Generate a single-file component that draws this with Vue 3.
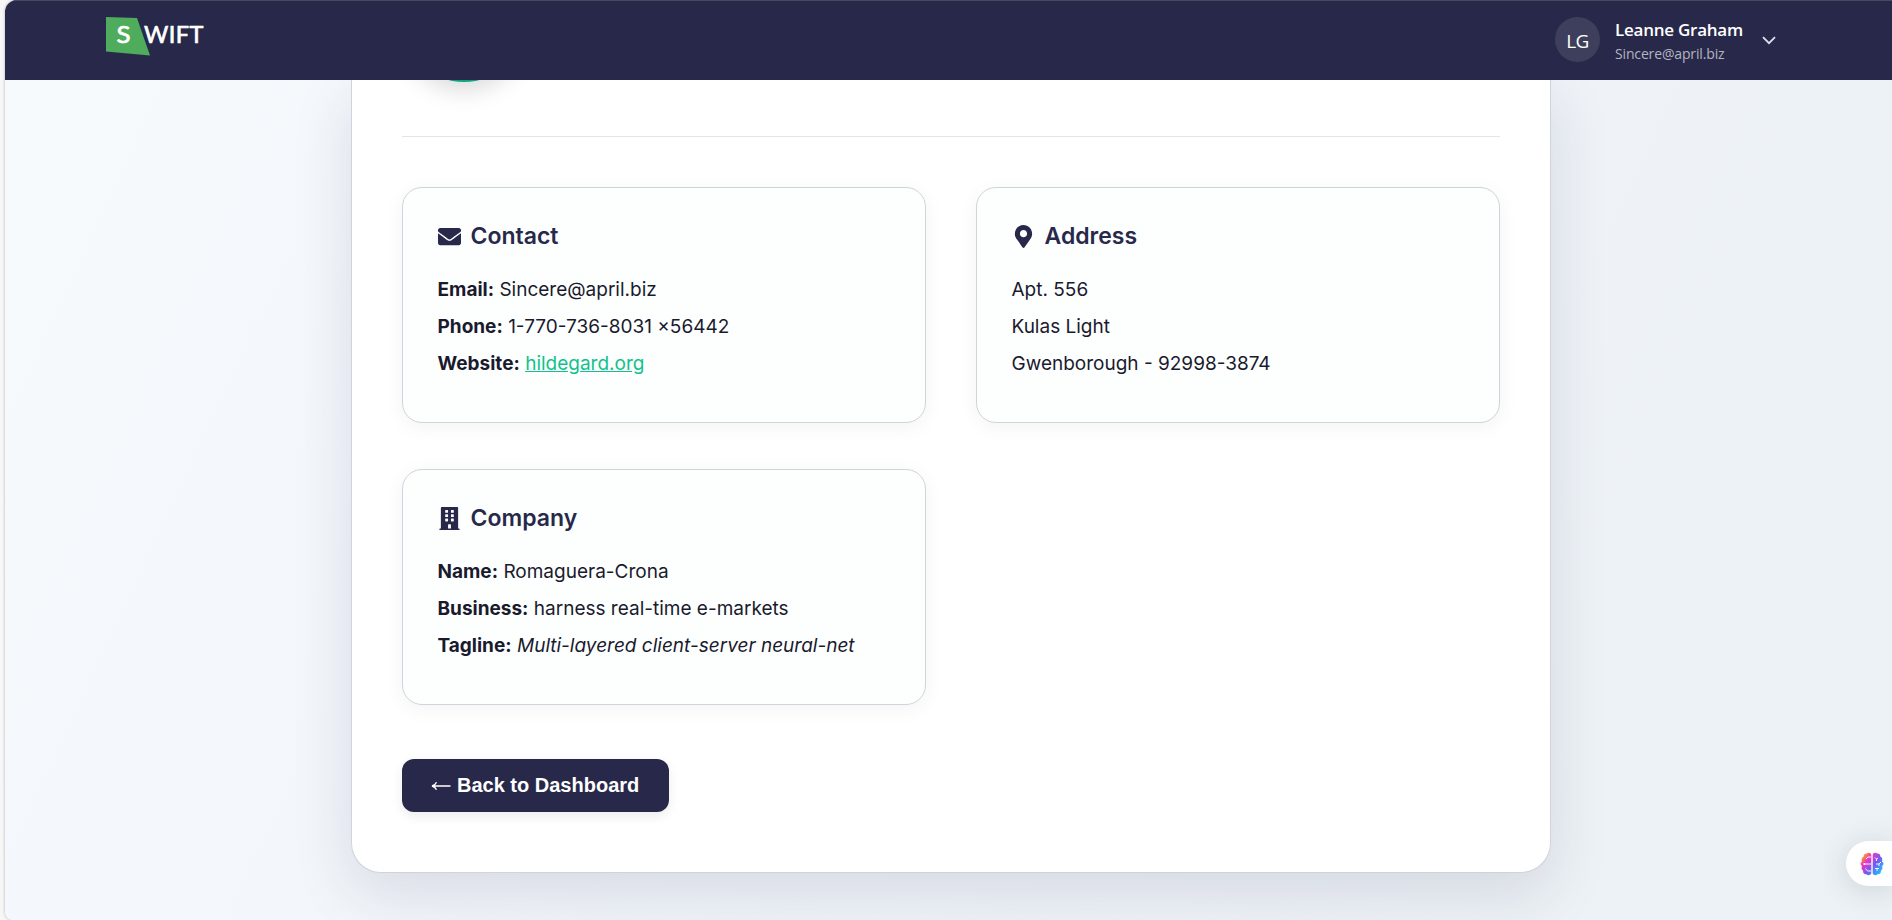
<script setup>
const icons = {
  mail: 'M502.3 190.8c3.9-3.1 9.7-.2 9.7 4.7V400c0 26.5-21.5 48-48 48H48c-26.5 0-48-21.5-48-48V195.6c0-5 5.7-7.8 9.7-4.7 22.4 17.4 52.1 39.5 154.1 113.6 21.1 15.4 56.7 47.8 92.2 47.6 35.7.3 72-32.8 92.3-47.6 102-74.1 131.6-96.3 154-113.7zM256 320c23.2.4 56.6-29.2 73.4-41.4 132.7-96.3 142.8-104.7 173.4-128.7 5.8-4.5 9.2-11.5 9.2-18.9v-19c0-26.5-21.5-48-48-48H48c-26.5 0-48 21.5-48 48v19c0 7.4 3.4 14.3 9.2 18.9 30.6 23.9 40.7 32.4 173.4 128.7 16.8 12.2 50.2 41.8 73.4 41.4z',
  pin: 'M172.268 501.67C26.97 291.031 0 269.413 0 192 0 85.961 85.961 0 192 0s192 85.961 192 192c0 77.413-26.97 99.031-172.268 309.67-9.535 13.774-29.93 13.773-39.464 0zM192 272c44.183 0 80-35.817 80-80s-35.817-80-80-80-80 35.817-80 80 35.817 80 80 80z',
  building: 'M436 480h-20V24c0-13.255-10.745-24-24-24H56C42.745 0 32 10.745 32 24v456H12c-6.627 0-12 5.373-12 12v20h448v-20c0-6.627-5.373-12-12-12zM128 76q0-12 12-12h40q12 0 12 12v40q0 12-12 12h-40q-12 0-12-12zM256 76q0-12 12-12h40q12 0 12 12v40q0 12-12 12h-40q-12 0-12-12zM128 172q0-12 12-12h40q12 0 12 12v40q0 12-12 12h-40q-12 0-12-12zM256 172q0-12 12-12h40q12 0 12 12v40q0 12-12 12h-40q-12 0-12-12zM128 268q0-12 12-12h40q12 0 12 12v40q0 12-12 12h-40q-12 0-12-12zM256 268q0-12 12-12h40q12 0 12 12v40q0 12-12 12h-40q-12 0-12-12zM192 480v-84q0-12 12-12h40q12 0 12 12v84z',
}
const cards = [
  {
    title: 'Contact', icon: icons.mail, viewBox: '0 0 512 512',
    rows: [
      { label: 'Email:', text: 'Sincere@april.biz' },
      { label: 'Phone:', text: '1-770-736-8031 x56442' },
      { label: 'Website:', text: 'hildegard.org', kind: 'link' },
    ],
  },
  {
    title: 'Address', icon: icons.pin, viewBox: '-64 0 512 512',
    rows: [{ text: 'Apt. 556' }, { text: 'Kulas Light' }, { text: 'Gwenborough - 92998-3874' }],
  },
  {
    title: 'Company', icon: icons.building, viewBox: '-32 0 512 512',
    rows: [
      { label: 'Name:', text: 'Romaguera-Crona' },
      { label: 'Business:', text: 'harness real-time e-markets' },
      { label: 'Tagline:', text: 'Multi-layered client-server neural-net', kind: 'italic' },
    ],
  },
]
</script>

<template>
  <div class="window">
    <div class="frame">
      <header class="topbar">
        <svg class="logo" width="102" height="42" viewBox="0 0 102 42">
          <path d="M0 1l31 1 13 37.500L0 35.500z" fill="#4fac5c" />
          <text x="10.6" y="27.2" textLength="14" lengthAdjust="spacingAndGlyphs">S</text>
          <text x="38" y="27.2" textLength="59.5" lengthAdjust="spacing">WIFT</text>
        </svg>
        <div class="user">
          <div class="avatar">LG</div>
          <div class="identity">
            <div class="name">Leanne Graham</div>
            <div class="mail">Sincere@april.biz</div>
          </div>
          <svg class="chevron" width="14" height="9" viewBox="0 0 14 9">
            <path d="M1 1.2l6 6 6-6" fill="none" stroke="#dfe0e8" stroke-width="1.8" />
          </svg>
        </div>
      </header>

      <main class="page">
        <section class="panel">
          <div class="profile"><div class="photo"></div></div>
          <div class="cards">
            <article v-for="card in cards" :key="card.title" class="card">
              <h2>
                <svg width="23" height="23" :viewBox="card.viewBox">
                  <path :d="card.icon" fill="currentColor" fill-rule="evenodd" />
                </svg>
                {{ card.title }}
              </h2>
              <p v-for="row in card.rows" :key="row.text">
                <template v-if="row.label"><strong>{{ row.label }}</strong>{{ ' ' }}</template>
                <a v-if="row.kind === 'link'">{{ row.text }}</a>
                <em v-else-if="row.kind === 'italic'">{{ row.text }}</em>
                <template v-else>{{ row.text }}</template>
              </p>
            </article>
          </div>
          <button class="back">
            <svg width="20" height="10" viewBox="0 0 20 10">
              <path d="M19.500 5H1.5M5.5 1.2C4.7 3 3 4.500 1 5c2 .5 3.700 2 4.500 3.800" fill="none" stroke="#fff" stroke-width="1.4" />
            </svg>
            <span>Back to Dashboard</span>
          </button>
        </section>
      </main>
    </div>

    <div class="assistant">
      <svg width="24" height="24" viewBox="0 0 24 24">
        <defs>
          <linearGradient id="brain" gradientUnits="userSpaceOnUse" x1="2" y1="3" x2="22" y2="20">
            <stop offset="0.05" stop-color="#fba11b" />
            <stop offset="0.28" stop-color="#ee35c5" />
            <stop offset="0.58" stop-color="#7c55f0" />
            <stop offset="0.95" stop-color="#20b9ff" />
          </linearGradient>
        </defs>
        <path d="M11.300 3v18c0 2-3 3-5 1.300-2 .2-3.600-1.500-3.200-3.600C1.300 17.500 1.200 15.500 2 14 0 13 0 10.500 2 9.500 1 7.500 2 5 3.700 4.500 3.500 2.500 5 1.200 6.800 1.400 8.500.2 11.300 1 11.300 3zM12.700 3v18c0 2 3 3 5 1.300 2 .2 3.600-1.500 3.200-3.600 1.800-1.200 1.900-3.200 1.100-4.700 2-1 2-3.500 0-4.500 1-2 0-4.500-1.700-5 .2-2-1.300-3.300-3.100-3.100C15.500.2 12.700 1 12.700 3z" fill="url(#brain)" />
        <path d="M11 5H8L6 7M3.500 12H11M5.500 16.500l2 2.500H11M15 5.500l1.500 1.500L18 6M16.500 7v2M16 12h3l2-2M19 12v2M15 16.500h4M17 16.500V19" fill="none" stroke="#fff" stroke-width="0.9" />
        <circle cx="4.500" cy="12" r="0.9" fill="#fff" />
      </svg>
    </div>
  </div>
</template>

<style>
body { margin: 0; overflow: hidden; }
</style>

<style scoped>
* { box-sizing: border-box; }
.window {
  height: 920px;
  padding-left: 5px;
  position: relative;
  overflow: hidden;
  background: #f7f7f7;
}
.frame {
  height: 920px;
  display: flex;
  flex-direction: column;
  overflow: hidden;
  border-radius: 12px 0 0 8px;
  background: linear-gradient(115deg, #f7fafd 0%, #f0f4f9 50%, #ecf1f5 100%);
  box-shadow: 0 0 3px rgba(0, 0, 0, 0.3);
}
.topbar {
  height: 80px;
  flex: none;
  display: flex;
  align-items: flex-start;
  justify-content: space-between;
  padding: 15px 116px 0 101px;
  background: #28294a;
  border-top: 1px solid #484960;
  position: relative;
  z-index: 2;
}
.logo text {
  font: 400 23.5px Lato, sans-serif;
  fill: #fff;
  stroke: #fff;
  stroke-width: 0.7px;
  stroke-linejoin: round;
}
.user { display: flex; align-items: flex-start; color: #fff; font-family: "Open Sans", sans-serif; }
.avatar {
  width: 45px;
  height: 45px;
  margin-top: 1px;
  border-radius: 50%;
  background: #3e3f5c;
  display: flex;
  align-items: center;
  justify-content: center;
  padding-top: 2px;
  font-size: 19px;
  letter-spacing: -0.6px;
}
.identity { margin-left: 15px; width: 128px; padding-top: 1px; white-space: nowrap; }
.name { font-size: 17px; font-weight: 600; line-height: 26px; letter-spacing: -0.25px; }
.mail { font-size: 14px; line-height: 22px; color: #b4b4c1; letter-spacing: -0.15px; }
.chevron { margin: 20px 0 0 19px; }
.page { flex: 1; min-height: 0; padding-left: 346px; }
.panel {
  width: 1200px;
  height: 793px;
  padding: 0 50px;
  background: #fff;
  border: 1px solid #cfd3db;
  border-top: 0;
  border-radius: 0 0 30px 30px;
  box-shadow: 0 20px 60px rgba(40, 41, 74, 0.13);
}
.profile {
  display: flow-root;
  height: 57px;
  border-bottom: 1px solid #e3e5e7;
  padding-left: 2px;
}
.photo {
  width: 120px;
  height: 120px;
  margin-top: -118px;
  border-radius: 50%;
  background: #10a37f;
  box-shadow: 0 8px 25px rgba(0, 0, 0, 0.15);
}
.cards {
  margin-top: 50px;
  display: grid;
  grid-template-columns: 1fr 1fr;
  gap: 46px 50px;
}
.card {
  height: 236px;
  padding: 31px 34.500px;
  background: #fdfffe;
  border: 1px solid #cfd3db;
  border-radius: 20px;
  box-shadow: 0 4px 20px rgba(0, 0, 0, 0.05);
  color: #1a1a2e;
  font-family: Inter, sans-serif;
}
h2 {
  display: flex;
  align-items: center;
  gap: 10px;
  margin: 0 0 18px;
  line-height: 34px;
  font-size: 23px;
  font-weight: 600;
  color: #28294a;
}
p { margin: 0; font-size: 19px; line-height: 37px; white-space: nowrap; }
strong { font-weight: 700; }
a { color: #10c28c; text-decoration: underline; }
.back {
  margin-top: 54px;
  width: 267px;
  height: 53px;
  border: 0;
  border-radius: 12px;
  background: #28294a;
  box-shadow: 0 4px 12px rgba(0, 0, 0, 0.08);
  color: #fff;
  display: flex;
  align-items: center;
  gap: 6px;
  padding: 0 29px;
  font: 700 20px "Liberation Sans", Arial, sans-serif;
  white-space: nowrap;
}
.assistant {
  position: absolute;
  right: 0;
  top: 841px;
  width: 46px;
  height: 45px;
  padding: 10.500px 0 0 13.500px;
  background: #fff;
  border-radius: 23px 0 0 23px;
  box-shadow: 0 4px 28px rgba(40, 55, 70, 0.16);
}
</style>
